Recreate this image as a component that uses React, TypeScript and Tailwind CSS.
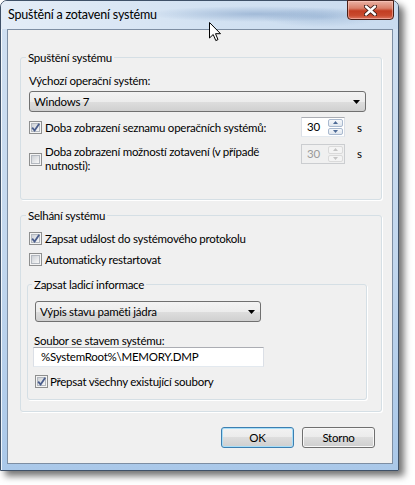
import React from "react";

const Check = ({checked = false}: {checked?: boolean}) => (
	<span className="relative flex h-[13px] w-[13px] shrink-0 items-center justify-center border border-[#8e8f8f] bg-[#f4f4f4]">
		<span className="h-[9px] w-[9px] border border-[#b3b8bf] bg-[linear-gradient(135deg,#cdd1d6,#f8f8f8)]" />
		{checked && (
			<svg className="absolute left-[0px] top-[0px]" width="11" height="11" viewBox="0 0 11 11">
				<path d="M2.2 5.6 L4.6 8.6 L9.2 1.8" fill="none" stroke="#4a5d8c" strokeWidth="1.8" />
			</svg>
		)}
	</span>
);

const Combo = ({text, className}: {text: string; className: string}) => (
	<div className={`flex h-[21px] items-center justify-between rounded-[3px] border border-[#707070] bg-[linear-gradient(to_bottom,#f3f3f3_0%,#ececec_50%,#dedede_50%,#d0d0d0_100%)] pl-[4px] pr-[5px] ${className}`}>
		<span>{text}</span>
		<svg width="7" height="4" viewBox="0 0 7 4">
			<path d="M0 0 H7 L3.5 4 Z" fill="#000" />
		</svg>
	</div>
);

const Spin = ({disabled = false}: {disabled?: boolean}) => (
	<div className={`flex h-[20px] w-[44px] shrink-0 border ${disabled ? "border-[#cbcdd0] bg-[#f0f0f0] text-[#9a9a9a]" : "border-[#abadb3] border-b-[#e3e9ef] border-x-[#dbdfe6] bg-white"}`}>
		<span className="flex-1 pl-[5px] leading-[18px]">30</span>
		<div className="flex w-[16px] flex-col gap-[1px] py-[1px] pr-[1px]">
			<div className={`flex flex-1 items-center justify-center rounded-[2px] border ${disabled ? "border-[#dadada] bg-[#f4f4f4]" : "border-[#a9b9cf] bg-[linear-gradient(to_bottom,#f6f8fb,#dfe6ee)]"}`}>
				<svg width="5" height="3" viewBox="0 0 5 3"><path d="M0 3 L2.5 0 L5 3 Z" fill={disabled ? "#c4c4c4" : "#4d6a96"} /></svg>
			</div>
			<div className={`flex flex-1 items-center justify-center rounded-[2px] border ${disabled ? "border-[#dadada] bg-[#f4f4f4]" : "border-[#a9b9cf] bg-[linear-gradient(to_bottom,#f6f8fb,#dfe6ee)]"}`}>
				<svg width="5" height="3" viewBox="0 0 5 3"><path d="M0 0 L5 0 L2.5 3 Z" fill={disabled ? "#c4c4c4" : "#4d6a96"} /></svg>
			</div>
		</div>
	</div>
);

const Button = ({label, primary = false}: {label: string; primary?: boolean}) => (
	<button
		className={`h-[21px] w-[73px] rounded-[3px] border bg-[linear-gradient(to_bottom,#f2f2f2_0%,#ebebeb_50%,#dddddd_50%,#cfcfcf_100%)] leading-[19px] ${primary ? "border-[#3c7fb1] shadow-[inset_0_0_0_1px_#a8def8]" : "border-[#707070] shadow-[inset_0_0_0_1px_#f8f8f8]"}`}
	>
		{label}
	</button>
);

export default function App() {
	return (
		<div className="relative h-[485px] w-[415px] overflow-hidden bg-white font-['Lato','Liberation_Sans',sans-serif] text-[11.5px] leading-[15px] tracking-[-0.25px] text-black">
			<div className="relative flex h-[471px] w-[399px] flex-col rounded-t-[7px] border border-[#3f5168] bg-[linear-gradient(to_bottom,#dfe9f5_0px,#cfdff1_30px,#c2d7ee_55%,#aac8e9_100%)] shadow-[inset_1px_1px_0_rgba(255,255,255,0.8),5px_5px_7px_rgba(0,0,0,0.55)]">
				{/* title bar */}
				<div className="h-[28px] rounded-t-[6px] bg-[radial-gradient(110px_8px_at_255px_13px,rgba(105,140,185,0.45),transparent),radial-gradient(60px_10px_at_320px_16px,rgba(120,155,195,0.35),transparent),linear-gradient(to_right,#e4edf7,#d3e2f2_50%,#c9dbef)] pl-[7px] pt-[6px] text-[12.5px] leading-[16px] tracking-[-0.2px]">
					Spuštění a zotavení systému
				</div>
				<div className="absolute right-[4px] top-[-1px] flex h-[20px] w-[47px] items-center justify-center rounded-b-[4px] border border-[#4a1f17] bg-[linear-gradient(to_bottom,#eab2a4_0%,#d9806a_40%,#c23d22_55%,#c84a2e_80%,#dc7560_100%)] shadow-[inset_0_0_0_1px_rgba(255,210,200,0.5)]">
					<svg width="13" height="11" viewBox="0 0 13 11">
						<path d="M2 1.5 L11 9.5 M11 1.5 L2 9.5" stroke="#3a1a14" strokeWidth="4.2" strokeLinecap="round" />
						<path d="M2 1.5 L11 9.5 M11 1.5 L2 9.5" stroke="#ffffff" strokeWidth="2.4" strokeLinecap="round" />
					</svg>
				</div>

				{/* client area */}
				<div className="ml-[6px] mr-[5px] flex h-[435px] flex-col border border-[#7d8ea3] bg-[#f0f0f0] pl-[12px] pr-[10px]">
					<fieldset className="mt-[20px] rounded-[3px] border border-[#d5dfe5] px-[8px] pb-[26px] shadow-[1px_1px_0_#fff]">
						<legend className="-ml-[3px] px-[2px]">Spuštění systému</legend>
						<div className="pt-[8px]">Výchozí operační systém:</div>
						<Combo text="Windows 7" className="mt-[3px] w-[337px]" />
						<div className="mt-[5px] flex h-[20px] items-center">
							<Check checked />
							<span className="ml-[3px] w-[256px]">Doba zobrazení seznamu operačních systémů:</span>
							<Spin />
							<span className="ml-[12px]">s</span>
						</div>
						<div className="mt-[7px] flex items-start">
							<div className="mt-[1px] flex items-center">
								<Check />
								<span className="ml-[3px] w-[256px] leading-[14px]">Doba zobrazení možností zotavení (v případě nutnosti):</span>
							</div>
							<Spin disabled />
							<span className="ml-[12px] mt-[2px]">s</span>
						</div>
					</fieldset>

					<fieldset className="mt-[8px] rounded-[3px] border border-[#d5dfe5] pb-[11px] pl-[8px] pr-[14px] shadow-[1px_1px_0_#fff]">
						<legend className="-ml-[3px] px-[2px]">Selhání systému</legend>
						<div className="mt-[8px] flex items-center gap-[3px]">
							<Check checked />
							<span>Zapsat událost do systémového protokolu</span>
						</div>
						<div className="mt-[6px] flex items-center gap-[3px]">
							<Check />
							<span>Automaticky restartovat</span>
						</div>
						<fieldset className="-ml-[2px] mt-[10px] w-[340px] rounded-[3px] border border-[#d5dfe5] pb-[10px] pl-[7px] shadow-[1px_1px_0_#fff]">
							<legend className="-ml-[3px] px-[2px]">Zapsat ladicí informace</legend>
							<Combo text="Výpis stavu paměti jádra" className="mt-[9px] w-[226px]" />
							<div className="ml-[-1px] mt-[13px] leading-[12px]">Soubor se stavem systému:</div>
							<div className="ml-[-2px] h-[20px] w-[231px] border border-[#abadb3] border-b-[#e3e9ef] border-x-[#dbdfe6] bg-white pl-[7px] leading-[18px]">
								%SystemRoot%\MEMORY.DMP
							</div>
							<div className="mt-[7px] flex items-center gap-[2px]">
								<Check checked />
								<span>Přepsat všechny existující soubory</span>
							</div>
						</fieldset>
					</fieldset>

					<div className="mr-[7px] mt-[15px] flex justify-end gap-[8px]">
						<Button label="OK" primary />
						<Button label="Storno" />
					</div>
				</div>
			</div>

			{/* mouse pointer */}
			<svg className="absolute left-[209px] top-[22px]" width="13" height="20" viewBox="0 0 13 20">
				<path d="M0.5 0.5 L0.5 16 L4.2 12.5 L6.8 18.6 L9 17.6 L6.5 11.7 L11.5 11.7 Z" fill="#fff" stroke="#000" strokeWidth="1" strokeLinejoin="round" />
			</svg>
		</div>
	);
}
